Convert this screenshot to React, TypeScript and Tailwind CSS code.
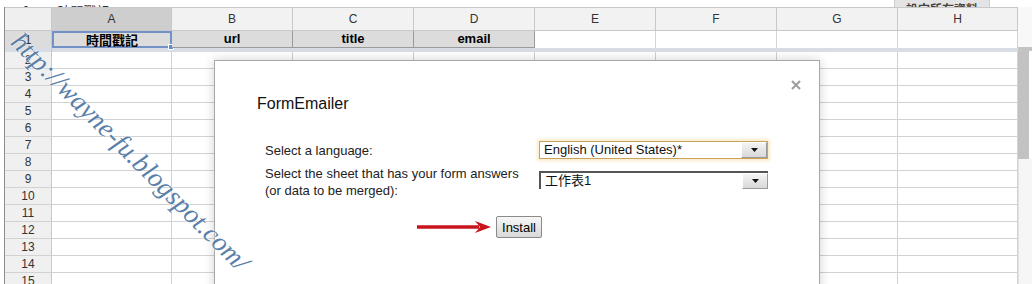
const cols = ['A', 'B', 'C', 'D', 'E', 'F', 'G', 'H']
const colW = ['w-[120px]', 'w-[121px]', 'w-[121px]', 'w-[121px]', 'w-[121px]', 'w-[121px]', 'w-[121px]', 'w-[120px]']
const rows = [2, 3, 4, 5, 6, 7, 8, 9, 10, 11, 12, 13, 14, 15]
const headers = ['時間戳記', 'url', 'title', 'email']

const Arrow = () => (
  <svg width="74" height="14" viewBox="0 0 74 14" className="block">
    <path d="M0 7 H62" stroke="#c8141c" strokeWidth="3.5" />
    <path d="M58 1 L74 7 L58 13 L63 7 Z" fill="#c8141c" />
  </svg>
)

const SelectBox = ({ value, focus }: { value: string; focus?: boolean }) => (
  <div
    className={
      focus
        ? 'flex h-[18px] w-[229px] border border-[#c9a25e] shadow-[0_0_3px_2px_#fbeccb] bg-white'
        : 'flex h-[18px] w-[229px] border-t-2 border-l-2 border-t-[#555] border-l-[#555] bg-white'
    }
  >
    <div className="flex-1 pl-[4px] text-[13px] leading-[16px] text-[#111] font-['Liberation_Sans','Noto_Sans_CJK_TC',sans-serif] overflow-hidden whitespace-nowrap">
      {value}
    </div>
    <div className="w-[26px] h-[16px] flex items-center justify-center bg-gradient-to-b from-[#f4f4f4] to-[#d8d8d8] border border-[#9a9a9a] border-t-white border-l-white">
      <svg width="7" height="4" viewBox="0 0 7 4">
        <path d="M0 0 H7 L3.5 4 Z" fill="#111" />
      </svg>
    </div>
  </div>
)

export default function App() {
  return (
    <div className="relative w-[1032px] h-[284px] overflow-hidden bg-white font-['Liberation_Sans',sans-serif] text-[#222]">
      {/* formula bar, mostly scrolled away */}
      <div className="h-[7px] overflow-hidden flex">
        <div className="flex items-end h-[7px] pl-[22px] text-[13px] leading-[13px] text-[#333]">
          <span className="font-bold italic mb-[-10px]">fx</span>
          <span className="ml-[24px] mb-[-10px] font-['Noto_Sans_CJK_TC',sans-serif]">時間戳記</span>
        </div>
        <div className="ml-auto flex items-end h-[7px]">
          <div className="h-[7px] w-[96px] bg-[#e4e4e4] border-x border-[#cfcfcf] flex items-end justify-center">
            <span className="mb-[-11px] text-[12px] font-bold text-[#444] font-['Noto_Sans_CJK_TC',sans-serif]">設定所有資料</span>
          </div>
          <div className="w-[42px]" />
        </div>
      </div>

      <div className="flex">
        <div className="w-[4px]" />
        <div className="w-[1px] bg-[#8c8c8c] h-[277px]" />
        <div className="flex flex-col">
          {/* column letters */}
          <div className="flex h-[24px] border-y border-[#c8c8c8]">
            <div className="w-[47px] bg-[#efefef] border-r border-[#c8c8c8]" />
            {cols.map((c, i) => (
              <div
                key={c}
                className={`${colW[i]} flex items-center justify-center text-[12px] text-[#333] border-r border-[#c8c8c8] ${
                  i === 0 ? 'bg-[#cecece]' : 'bg-[#f2f2f2]'
                }`}
              >
                {c}
              </div>
            ))}
          </div>
          {/* frozen row 1 */}
          <div className="flex h-[17px]">
            <div className="w-[47px] bg-[#dcdcdc] border-r border-[#c8c8c8] flex items-center justify-center text-[12px] text-[#333]">
              1
            </div>
            {cols.map((c, i) => (
              <div
                key={c}
                className={`${colW[i]} relative flex items-center justify-center text-[13px] font-bold text-black ${
                  i === 0
                    ? 'bg-[#dcdcdc] border-2 border-[#7291c4] font-["Noto_Sans_CJK_TC",sans-serif]'
                    : i < 4
                      ? 'bg-[#dcdcdc] border-r border-b border-[#9a9a9a]'
                      : 'bg-white border-r border-[#d4d4d4]'
                }`}
              >
                {headers[i] ?? ''}
                {i === 0 && <span className="absolute right-[-4px] bottom-[-4px] w-[6px] h-[6px] bg-[#5c8fd0] border border-white" />}
              </div>
            ))}
          </div>
          <div className="flex h-[4px]">
            <div className="w-[47px] bg-[#d8dde5] border-r border-[#c8c8c8]" />
            <div className="w-[966px] bg-[#d8dde5]" />
          </div>
          {/* data rows */}
          {rows.map((r) => (
            <div key={r} className="flex h-[17px] border-b border-[#d2d2d2]">
              <div className="w-[47px] bg-[#f0f0f0] border-r border-[#c8c8c8] flex items-center justify-center text-[12px] text-[#333]">
                {r}
              </div>
              {cols.map((c, i) => (
                <div key={c} className={`${colW[i]} bg-white border-r border-[#d2d2d2]`} />
              ))}
            </div>
          ))}
        </div>
        {/* vertical scrollbar */}
        <div className="flex flex-col w-[14px]">
          <div className="h-[40px] bg-[#f8f8f8]" />
          <div className="h-[4px] bg-[#c4c4c4]" />
          <div className="h-[108px] bg-[#c2c2c2] mr-[3px]" />
          <div className="flex-1 bg-[#f6f6f6] border-l border-[#e2e2e2]" />
        </div>
      </div>

      {/* watermark */}
      <div className="absolute left-[25px] top-[28px] origin-top-left rotate-[45deg] whitespace-nowrap text-[27px] leading-[27px] italic text-[#5a7fa8] font-['Liberation_Serif',serif] [text-shadow:0_0_2px_#fff,0_0_1px_#fff] pointer-events-none z-20">
        http://wayne-fu.blogspot.com/
      </div>

      {/* FormEmailer dialog */}
      <div className="absolute left-[214px] top-[60px] w-[606px] h-[240px] bg-white border border-[#a8a8a8] shadow-[0_0_10px_rgba(0,0,0,0.18)] z-10">
        <svg width="10" height="10" viewBox="0 0 10 10" className="absolute right-[18px] top-[19px]">
          <path d="M1 1 L9 9 M9 1 L1 9" stroke="#9c9c9c" strokeWidth="2" />
        </svg>
        <div className="pl-[42px] pt-[33px] text-[16px] leading-[19px] text-[#111]">FormEmailer</div>
        <div className="pl-[50px] pt-[28px] text-[13px] leading-[17px] text-[#222]">
          <div className="flex items-center">
            <div className="w-[274px]">Select a language:</div>
            <SelectBox value="English (United States)*" focus />
          </div>
          <div className="flex items-start mt-[6px]">
            <div className="w-[274px]">
              Select the sheet that has your form answers
              <br />
              (or data to be merged):
            </div>
            <div className="mt-[6px]">
              <SelectBox value="工作表1" />
            </div>
          </div>
          <div className="flex items-center pl-[152px] mt-[17px] gap-[5px]">
            <Arrow />
            <div className="w-[46px] h-[22px] flex items-center justify-center border border-[#8a8a8a] rounded-[2px] bg-gradient-to-b from-[#f7f7f7] to-[#d9d9d9] text-black">
              Install
            </div>
          </div>
        </div>
      </div>
    </div>
  )
}
